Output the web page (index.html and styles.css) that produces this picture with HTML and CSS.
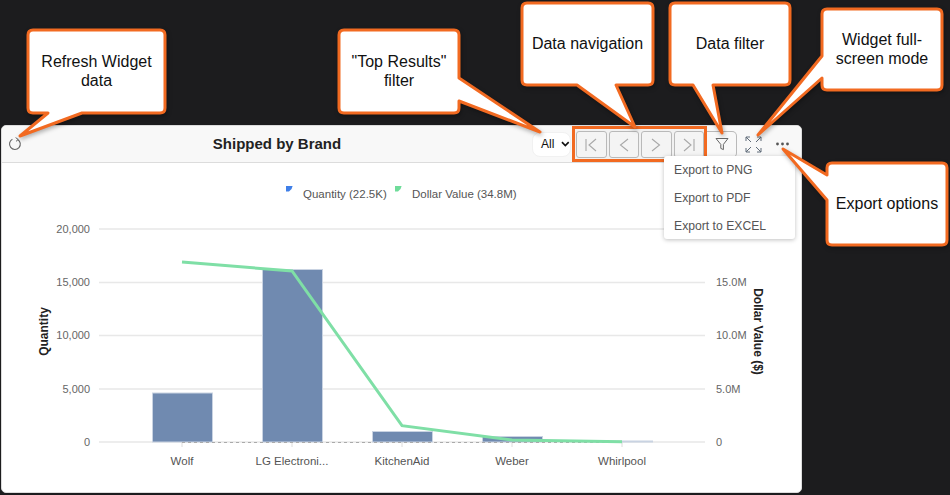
FILE: index.html
```html
<!DOCTYPE html>
<html lang="en">
<head>
<meta charset="utf-8">
<title>Shipped by Brand</title>
<link rel="stylesheet" href="styles.css">
</head>
<body>
<section class="widget">
  <header class="widget-head">
    <button class="icon-btn refresh" aria-label="Refresh">
      <svg width="14" height="14" viewBox="0 0 14 14"><path d="M9.6 2.4A5.4 5.4 0 1 1 4.4 2.3" fill="none" stroke="#666" stroke-width="1.1"/><path d="M7.6 0.6L10.2 2.4L8 4.4" fill="none" stroke="#666" stroke-width="1"/></svg>
    </button>
    <h2 class="title">Shipped by Brand</h2>
    <div class="top-results">
      <span>All</span>
      <svg width="9" height="6" viewBox="0 0 9 6"><path d="M1 1L4.5 4.6L8 1" fill="none" stroke="#111" stroke-width="1.7"/></svg>
    </div>
    <div class="pager">
      <button class="page-btn" aria-label="First"><svg width="16" height="16" viewBox="0 0 16 16"><path d="M3 2V14M13 2L6 8L13 14" fill="none" stroke="#a8a8a8" stroke-width="1.1"/></svg></button>
      <button class="page-btn" aria-label="Previous"><svg width="16" height="16" viewBox="0 0 16 16"><path d="M12 2L4.5 8L12 14" fill="none" stroke="#a8a8a8" stroke-width="1.1"/></svg></button>
      <button class="page-btn" aria-label="Next"><svg width="16" height="16" viewBox="0 0 16 16"><path d="M4 2L11.5 8L4 14" fill="none" stroke="#a8a8a8" stroke-width="1.1"/></svg></button>
      <button class="page-btn" aria-label="Last"><svg width="16" height="16" viewBox="0 0 16 16"><path d="M3 2L10 8L3 14M13 2V14" fill="none" stroke="#a8a8a8" stroke-width="1.1"/></svg></button>
    </div>
    <button class="filter-btn" aria-label="Filter"><svg width="14" height="14" viewBox="0 0 14 14"><path d="M1 1.5H13L8.4 7.4V12.6L5.8 11.4V7.4Z" fill="none" stroke="#666" stroke-width="1"/></svg></button>
    <button class="icon-btn expand" aria-label="Full screen"><svg width="17" height="17" viewBox="0 0 17 17"><path d="M1 5V1H5M1 1L6 6M12 1H16V5M16 1L11 6M1 12V16H5M1 16L6 11M16 12V16H12M16 16L11 11" fill="none" stroke="#5f6b78" stroke-width="1"/></svg></button>
    <button class="icon-btn more" aria-label="More"><svg width="13" height="4" viewBox="0 0 13 4"><circle cx="1.5" cy="2" r="1.4" fill="#555"/><circle cx="6.5" cy="2" r="1.4" fill="#555"/><circle cx="11.5" cy="2" r="1.4" fill="#555"/></svg></button>
  </header>
  <svg class="chart" viewBox="2 163 799 329" width="799" height="329">
    <path class="legend-blue" d="M286 186H292.6Q292 190 289 191.6H286Z"/>
    <text class="legend" x="303" y="198">Quantity (22.5K)</text>
    <path class="legend-green" d="M395 186H401.6Q401 190 398 191.6H395Z"/>
    <text class="legend" x="412" y="198">Dollar Value (34.8M)</text>

    <g class="grid">
      <path d="M99 229H705M99 282.5H705M99 335.5H705M99 389H705M99 442H705"/>
    </g>
    <g class="ticks"><path d="M182 442V447M292 442V447M402 442V447M512 442V447M622 442V447"/></g>

    <g class="y-labels">
      <text x="90" y="233">20,000</text>
      <text x="90" y="286">15,000</text>
      <text x="90" y="339">10,000</text>
      <text x="90" y="393">5,000</text>
      <text x="90" y="446">0</text>
    </g>
    <g class="r-labels">
      <text x="716" y="286">15.0M</text>
      <text x="716" y="339">10.0M</text>
      <text x="716" y="393">5.0M</text>
      <text x="716" y="446">0</text>
    </g>
    <text class="axis-title" transform="translate(48 331.5) rotate(-90)">Quantity</text>
    <text class="axis-title" transform="translate(754 331.5) rotate(90)">Dollar Value ($)</text>

    <g class="bars">
      <rect x="152.5" y="393" width="60" height="49"/>
      <rect x="262.5" y="269.5" width="60" height="172.5"/>
      <rect x="372.5" y="431.5" width="60" height="10.5"/>
      <rect x="482.5" y="436.5" width="60" height="5.5"/>
      <rect x="592.5" y="441" width="60" height="1"/>
    </g>
    <path class="zero" d="M182 442.5H622"/>
    <path class="line" d="M182 262L292 271L402 425.7L512 440L622 441.7"/>

    <g class="x-labels">
      <text x="182" y="465">Wolf</text>
      <text x="292" y="465">LG Electroni...</text>
      <text x="402" y="465">KitchenAid</text>
      <text x="512" y="465">Weber</text>
      <text x="622" y="465">Whirlpool</text>
    </g>
  </svg>
  <ul class="export-menu">
    <li>Export to PNG</li>
    <li>Export to PDF</li>
    <li>Export to EXCEL</li>
  </ul>
</section>

<svg class="callout-shapes" width="950" height="495" viewBox="0 0 950 495" aria-hidden="true">
  <path d="M33 30H160Q165 30 165 35V108Q165 113 160 113H82L20 136L48 113H33Q28 113 28 108V35Q28 30 33 30Z"/>
  <path d="M344 30H454Q459 30 459 35V78L540 132L459 101V108Q459 113 454 113H344Q339 113 339 108V35Q339 30 344 30Z"/>
  <path d="M527 3H648Q653 3 653 8V80Q653 85 648 85H616L635 127L577 85H527Q522 85 522 80V8Q522 3 527 3Z"/>
  <path d="M675 3H785Q790 3 790 8V80Q790 85 785 85H713L722 133L693 85H675Q670 85 670 80V8Q670 3 675 3Z"/>
  <path d="M827 9H937Q942 9 942 14V85Q942 90 937 90H827Q822 90 822 85V78L758 135L822 56V14Q822 9 827 9Z"/>
  <path d="M832 163H942Q947 163 947 168V240Q947 245 942 245H832Q827 245 827 240V200L783 149L827 175V168Q827 163 832 163Z"/>
</svg>
<div class="callout c-refresh">Refresh Widget<br>data</div>
<div class="callout c-top">"Top Results"<br>filter</div>
<div class="callout c-nav">Data navigation</div>
<div class="callout c-filter">Data filter</div>
<div class="callout c-full">Widget full-<br>screen mode</div>
<div class="callout c-export">Export options</div>
</body>
</html>
```
FILE: styles.css
```css
* { box-sizing: border-box; }
html, body { margin: 0; height: 495px; overflow: hidden; }
body {
  background: #1c1c1e;
  font-family: "Liberation Sans", Arial, sans-serif;
  position: relative;
  padding: 125px 0 0 1px;
}
.widget {
  position: relative;
  width: 801px;
  height: 368px;
  background: #fff;
  border: 1px solid #dcdcdc;
  border-radius: 5px;
}
.widget-head {
  display: flex;
  align-items: center;
  height: 37px;
  padding: 0 3px 0 6px;
  background: #f8f8f8;
  border-bottom: 1px solid #dcdcdc;
  border-radius: 5px 5px 0 0;
}
.title {
  flex: 1;
  margin: 0;
  padding-bottom: 2px;
  font-size: 15px;
  font-weight: 700;
  color: #222;
  text-align: center;
}
.icon-btn, .page-btn, .filter-btn {
  display: flex;
  align-items: center;
  justify-content: center;
  padding: 0;
  background: none;
  border: none;
}
.top-results {
  display: flex;
  align-items: center;
  gap: 7px;
  width: 39px;
  height: 25px;
  margin-right: 1px;
  padding-left: 8px;
  font-size: 12px;
  color: #111;
  background: #fff;
  border: 1px solid #f1f1f1;
  border-radius: 8px;
}
.pager {
  display: flex;
  gap: 2px;
  width: 135px;
  height: 36px;
  padding: 2px 0 1px 1px;
  background: #f1f1f1;
  border: 3px solid #f26a21;
}
.page-btn {
  flex: 1;
  background: #f4f4f4;
  border: 1px solid #b9b9b9;
  border-radius: 3px;
}
.filter-btn {
  width: 30px;
  height: 27px;
  background: #f8f8f8;
  border: 1px solid #b9b9b9;
  border-left: none;
  border-radius: 0 5px 5px 0;
}
.expand { width: 17px; height: 17px; margin-left: 8px; }
.more { width: 13px; height: 4px; margin-left: 14px; margin-right: 9px; }
.chart { display: block; }
.legend { font-size: 11.5px; fill: #555; }
.legend-blue { fill: #3f7fe8; }
.legend-green { fill: #6fdc9a; }
.grid path { fill: none; stroke: #e8e8e8; stroke-width: 1.4; }
.ticks path { fill: none; stroke: #dcdcdc; stroke-width: 1; }
.y-labels text { font-size: 11px; fill: #666; text-anchor: end; }
.r-labels text { font-size: 11px; fill: #666; }
.axis-title { font-size: 12px; font-weight: 700; fill: #222; text-anchor: middle; }
.bars rect { fill: #708ab0; stroke: #c9d3e2; stroke-width: 1; }
.zero { fill: none; stroke: #aaa; stroke-width: 1; stroke-dasharray: 3 3; }
.line { fill: none; stroke: #7fdfa6; stroke-width: 3; }
.x-labels text { font-size: 11.5px; fill: #555; text-anchor: middle; }
.export-menu {
  position: absolute;
  left: 662px;
  top: 30px;
  width: 131px;
  height: 83px;
  margin: 0;
  padding: 0 0 0 10px;
  list-style: none;
  background: #fff;
  border-radius: 3px;
  box-shadow: 0 1px 4px rgba(0, 0, 0, .25);
  font-size: 12.2px;
  color: #555;
}
.export-menu li { height: 28px; line-height: 28px; }
.callout-shapes {
  position: absolute;
  left: 0;
  top: 0;
  filter: drop-shadow(1px 2px 2px rgba(0, 0, 0, .3));
}
.callout-shapes path { fill: #fff; stroke: #f26a21; stroke-width: 3; stroke-linejoin: round; }
.callout {
  position: absolute;
  display: flex;
  align-items: center;
  justify-content: center;
  text-align: center;
  font-size: 16px;
  line-height: 18.5px;
  color: #111;
}
.c-refresh { left: 28px; top: 30px; width: 137px; height: 83px; }
.c-top { left: 339px; top: 30px; width: 120px; height: 83px; }
.c-nav { left: 522px; top: 3px; width: 131px; height: 82px; }
.c-filter { left: 670px; top: 3px; width: 120px; height: 82px; }
.c-full { left: 822px; top: 9px; width: 120px; height: 81px; }
.c-export { left: 827px; top: 163px; width: 120px; height: 82px; }
```
